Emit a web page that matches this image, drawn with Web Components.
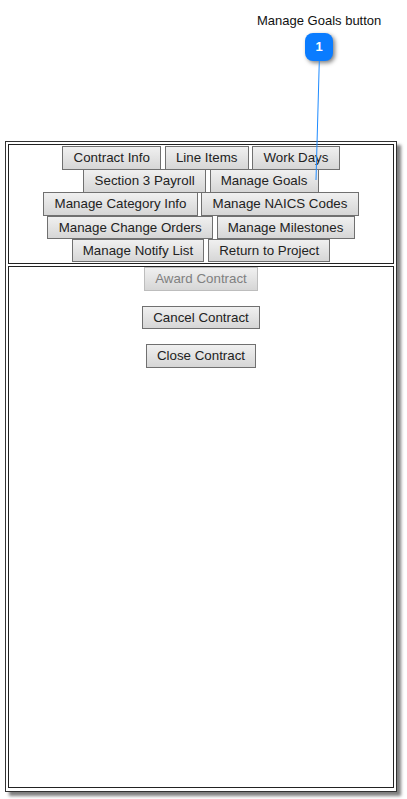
<!DOCTYPE html>
<html>
<head>
<meta charset="utf-8">
<title>Manage Goals button</title>
<style>
  html, body { margin: 0; background: #fff; }
  body { font-family: "Liberation Sans", Arial, sans-serif; color: #222; }
</style>
</head>
<body>
<snap-page>
  <span slot="title">Manage Goals button</span>
  <snap-frame>
    <nav-panel>
      <btn-row>
        <ui-button>Contract Info</ui-button>
        <ui-button>Line Items</ui-button>
        <ui-button>Work Days</ui-button>
      </btn-row>
      <btn-row>
        <ui-button>Section 3 Payroll</ui-button>
        <ui-button>Manage Goals</ui-button>
      </btn-row>
      <btn-row>
        <ui-button>Manage Category Info</ui-button>
        <ui-button>Manage NAICS Codes</ui-button>
      </btn-row>
      <btn-row>
        <ui-button>Manage Change Orders</ui-button>
        <ui-button>Manage Milestones</ui-button>
      </btn-row>
      <btn-row>
        <ui-button>Manage Notify List</ui-button>
        <ui-button>Return to Project</ui-button>
      </btn-row>
    </nav-panel>
    <action-panel>
      <ui-button disabled>Award Contract</ui-button>
      <ui-button>Cancel Contract</ui-button>
      <ui-button>Close Contract</ui-button>
    </action-panel>
  </snap-frame>
</snap-page>

<script>
class SnapPage extends HTMLElement {
  constructor() {
    super();
    this.attachShadow({ mode: "open" });
    this.shadowRoot.innerHTML = `
      <style>
        :host {
          display: block;
          position: relative;
          width: 407px;
          height: 799px;
          overflow: hidden;
        }
        #head {
          height: 141px;
          padding-top: 13px;
          box-sizing: border-box;
          padding-left: 257px;
          font-size: 13px;
          line-height: 15px;
          color: #111;
        }
        #badge {
          position: absolute;
          left: 305px;
          top: 33px;
          width: 28px;
          height: 28px;
          border-radius: 8px;
          background: #0a7cff;
          color: #fff;
          font-size: 13px;
          font-weight: bold;
          line-height: 28px;
          text-align: center;
          box-shadow: 2px 2px 4px rgba(0,0,0,0.5);
        }
        #line {
          position: absolute;
          left: 0;
          top: 0;
          z-index: 5;
          pointer-events: none;
        }
        #body { padding-left: 5px; }
      </style>
      <div id="head"><slot name="title"></slot></div>
      <div id="body"><slot></slot></div>
      <svg id="line" width="407" height="200">
        <line x1="319.3" y1="61" x2="316" y2="180" stroke="#1e8bff" stroke-width="1"/>
      </svg>
      <div id="badge">1</div>
    `;
  }
}
customElements.define("snap-page", SnapPage);

class SnapFrame extends HTMLElement {
  constructor() {
    super();
    this.attachShadow({ mode: "open" });
    this.shadowRoot.innerHTML = `
      <style>
        :host {
          display: flex;
          flex-direction: column;
          gap: 2px;
          box-sizing: border-box;
          width: 392px;
          height: 651px;
          padding: 2px 2px 3px 2px;
          border: 1px solid #333;
          box-shadow: 4px 4px 3px rgba(0,0,0,0.5);
          background: #fff;
        }
      </style>
      <slot></slot>
    `;
  }
}
customElements.define("snap-frame", SnapFrame);

class NavPanel extends HTMLElement {
  constructor() {
    super();
    this.attachShadow({ mode: "open" });
    this.shadowRoot.innerHTML = `
      <style>
        :host {
          display: flex;
          flex-direction: column;
          box-sizing: border-box;
          height: 120px;
          padding-top: 1px;
          border: 1px solid #222;
        }
      </style>
      <slot></slot>
    `;
  }
}
customElements.define("nav-panel", NavPanel);

class BtnRow extends HTMLElement {
  constructor() {
    super();
    this.attachShadow({ mode: "open" });
    this.shadowRoot.innerHTML = `
      <style>
        :host {
          display: flex;
          justify-content: center;
          gap: 3.7px;
          height: 23.2px;
        }
      </style>
      <slot></slot>
    `;
  }
}
customElements.define("btn-row", BtnRow);

class ActionPanel extends HTMLElement {
  constructor() {
    super();
    this.attachShadow({ mode: "open" });
    this.shadowRoot.innerHTML = `
      <style>
        :host {
          display: flex;
          flex-direction: column;
          align-items: center;
          gap: 15px;
          box-sizing: border-box;
          flex: 1;
          border: 1px solid #222;
        }
      </style>
      <slot></slot>
    `;
  }
}
customElements.define("action-panel", ActionPanel);

class UiButton extends HTMLElement {
  constructor() {
    super();
    this.attachShadow({ mode: "open" });
    this.shadowRoot.innerHTML = `
      <style>
        :host {
          display: block;
          box-sizing: border-box;
          height: 23.5px;
          padding: 0 10.2px;
          border: 1px solid #707070;
          background: linear-gradient(#f0f0f0, #d6d6d6);
          color: #222;
          font-size: 13.33px;
          line-height: 21px;
          white-space: nowrap;
        }
        :host([disabled]) {
          border-color: #bdbdbd;
          color: #808080;
        }
      </style>
      <slot></slot>
    `;
  }
}
customElements.define("ui-button", UiButton);
</script>
</body>
</html>
